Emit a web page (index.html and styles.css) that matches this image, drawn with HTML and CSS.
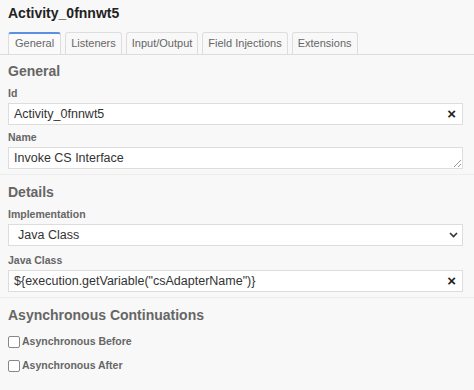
FILE: index.html
```html
<!DOCTYPE html>
<html lang="en">
<head>
    <meta charset="UTF-8">
    <title>Properties Panel</title>
    <link rel="stylesheet" href="styles.css">
</head>
<body>
    <div class="panel">
        <div class="header">Activity_0fnnwt5</div>

        <ul class="tabs">
            <li class="tab active">General</li>
            <li class="tab">Listeners</li>
            <li class="tab">Input/Output</li>
            <li class="tab">Field Injections</li>
            <li class="tab">Extensions</li>
        </ul>

        <div class="group">
            <div class="group-title">General</div>
            <div class="entry">
                <label>Id</label>
                <div class="field">
                    <input type="text" value="Activity_0fnnwt5">
                    <span class="clear">&times;</span>
                </div>
            </div>
            <div class="entry">
                <label>Name</label>
                <div class="field">
                    <div class="textarea">Invoke CS Interface</div>
                    <svg class="resize" width="8" height="8" viewBox="0 0 8 8">
                        <path d="M8 1 L1 8 M8 5 L5 8" stroke="#999" stroke-width="1"/>
                    </svg>
                </div>
            </div>
        </div>

        <div class="group">
            <div class="group-title">Details</div>
            <div class="entry select-entry">
                <label>Implementation</label>
                <div class="field">
                    <div class="select">Java Class</div>
                    <svg class="chevron" width="9" height="6" viewBox="0 0 9 6">
                        <path d="M1 1 L4.5 4.5 L8 1" fill="none" stroke="#333" stroke-width="1.6"/>
                    </svg>
                </div>
            </div>
            <div class="entry">
                <label>Java Class</label>
                <div class="field">
                    <input type="text" value='${execution.getVariable("csAdapterName")}'>
                    <span class="clear">&times;</span>
                </div>
            </div>
        </div>

        <div class="group last">
            <div class="group-title">Asynchronous Continuations</div>
            <div class="checks">
                <div class="check">
                    <span class="box"></span>
                    <span class="check-label">Asynchronous Before</span>
                </div>
                <div class="check">
                    <span class="box"></span>
                    <span class="check-label">Asynchronous After</span>
                </div>
            </div>
        </div>
    </div>
</body>
</html>
```

FILE: styles.css
```css
body {
    margin: 0;
    background-color: #f8f8f8;
    font-family: "Liberation Sans", Arial, sans-serif;
    color: #333;
}
.panel {
    width: 474px;
    height: 390px;
    overflow: hidden;
}
.header {
    font-size: 14px;
    font-weight: bold;
    color: #222;
    padding: 5px 8px 0 8px;
    height: 27px;
}
.tabs {
    list-style: none;
    margin: 0;
    padding: 0 0 0 8px;
    display: flex;
    gap: 4px;
    border-bottom: 1px solid #ddd;
    height: 22px;
}
.tab {
    font-size: 11px;
    color: #666;
    padding: 4px 5px 0 5px;
    border: 1px solid #ddd;
    border-bottom: none;
    border-radius: 3px 3px 0 0;
    background-color: #f8f8f8;
}
.tab.active {
    border-top: 2px solid #5b8fe0;
    padding: 3px 6px 0 6px;
    background-color: #fafafa;
}
.group {
    padding: 9px 11px 5px 8px;
    border-bottom: 1px solid #ececec;
}
.tabs + .group {
    padding-top: 8px;
}
.group-title {
    font-size: 14px;
    line-height: 16px;
    font-weight: bold;
    color: #666;
    margin-bottom: 8px;
}
.entry {
    margin-bottom: 6px;
}
.entry:last-child {
    margin-bottom: 0;
}
.entry.select-entry {
    margin-bottom: 8px;
}
label {
    display: block;
    font-size: 10.5px;
    line-height: 12px;
    font-weight: bold;
    color: #666;
    margin-bottom: 4px;
}
.field {
    position: relative;
}
input, .textarea, .select {
    display: block;
    width: 100%;
    height: 22px;
    box-sizing: border-box;
    border: 1px solid #ddd;
    background-color: #fff;
    font-family: "Liberation Sans", Arial, sans-serif;
    font-size: 12.5px;
    color: #333;
    padding: 3px 5px;
    margin: 0;
    outline: none;
}
.select {
    padding-left: 9px;
}
.clear {
    position: absolute;
    right: 7px;
    top: 2px;
    font-size: 15px;
    font-weight: bold;
    color: #222;
}
.resize {
    position: absolute;
    right: 2px;
    bottom: 2px;
}
.chevron {
    position: absolute;
    right: 5px;
    top: 8px;
}
.checks {
    margin-top: -2px;
    padding-bottom: 9px;
}
.check {
    display: flex;
    align-items: center;
    height: 24px;
}
.box {
    width: 10px;
    height: 10px;
    border: 1px solid #888;
    border-radius: 2px;
    background-color: #fff;
    margin-right: 2px;
    margin-top: 2px;
}
.check-label {
    font-size: 10.5px;
    font-weight: bold;
    color: #666;
}
```
